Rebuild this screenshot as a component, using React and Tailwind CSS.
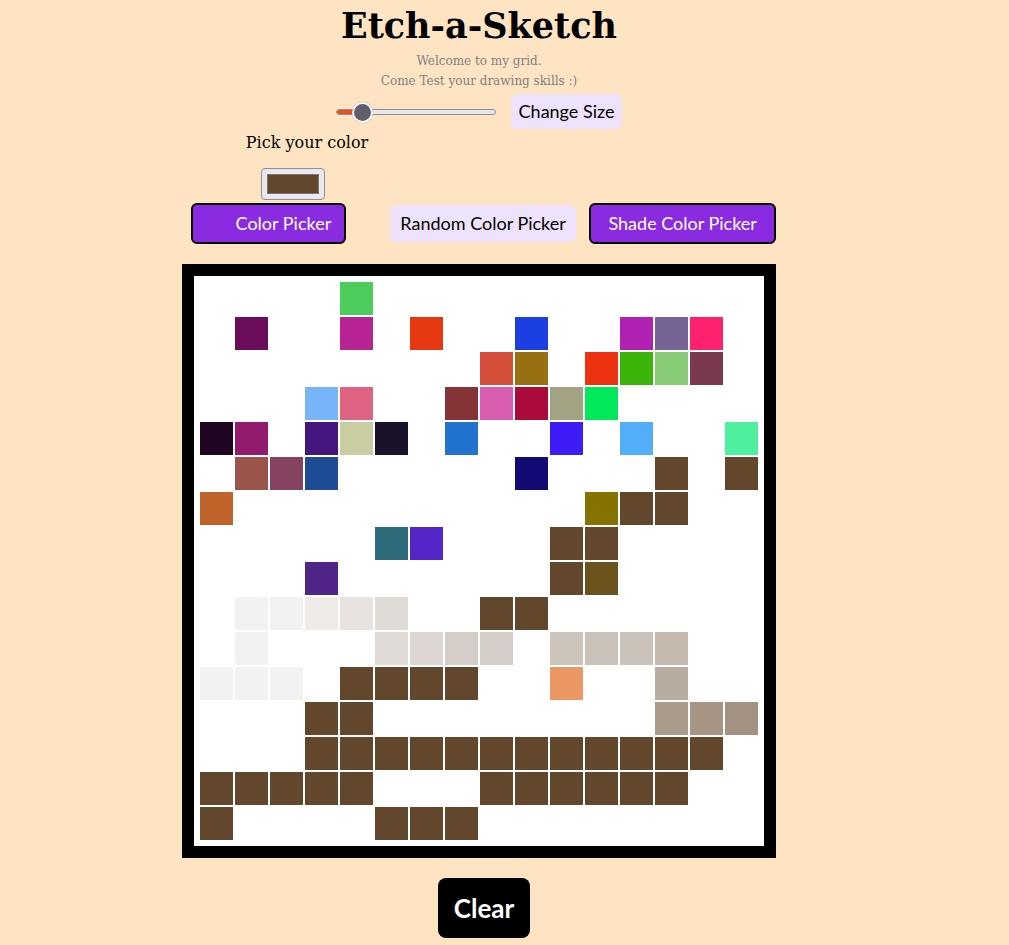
import React from 'react';

const B = '#62472d';

// 16x16 drawing, sparse: [row, col, color]
const painted = [
  [0, 4, '#4ccd5c'],
  [1, 1, '#6b0d5a'], [1, 4, '#b72393'], [1, 6, '#e63911'], [1, 9, '#1c3fe3'], [1, 12, '#b021b2'], [1, 13, '#776496'], [1, 14, '#fe226e'],
  [2, 8, '#d64f3a'], [2, 9, '#977011'], [2, 11, '#ed3212'], [2, 12, '#3cb50a'], [2, 13, '#88cc78'], [2, 14, '#7a3950'],
  [3, 3, '#76b5f7'], [3, 4, '#de6383'], [3, 7, '#863337'], [3, 8, '#d85db0'], [3, 9, '#ab0b3a'], [3, 10, '#a3a383'], [3, 11, '#00e85b'],
  [4, 0, '#200622'], [4, 1, '#931b6d'], [4, 3, '#46167f'], [4, 4, '#cacca1'], [4, 5, '#1a122b'], [4, 7, '#2273ce'], [4, 10, '#3d1cf8'], [4, 12, '#52aef8'], [4, 15, '#4fefa0'],
  [5, 1, '#9b544a'], [5, 2, '#864261'], [5, 3, '#1e4c95'], [5, 9, '#110a75'], [5, 13, B], [5, 15, B],
  [6, 0, '#c0632a'], [6, 11, '#857200'], [6, 12, B], [6, 13, B],
  [7, 5, '#2d6a7a'], [7, 6, '#5425c9'], [7, 10, B], [7, 11, B],
  [8, 3, '#512587'], [8, 10, B], [8, 11, '#6b531d'],
  [9, 1, '#f3f2f0'], [9, 2, '#f2f1ef'], [9, 3, '#efebe8'], [9, 4, '#e8e3e1'], [9, 5, '#dfdbd6'], [9, 8, B], [9, 9, B],
  [10, 1, '#f3f2f0'], [10, 5, '#dfdad5'], [10, 6, '#ddd6d2'], [10, 7, '#d5cdc7'], [10, 8, '#d5cdc8'], [10, 10, '#cdc4bb'], [10, 11, '#cbc2b9'], [10, 12, '#cbc2b9'], [10, 13, '#c5b8ad'],
  [11, 0, '#f3f2f0'], [11, 1, '#f3f2f0'], [11, 2, '#f3f2f0'], [11, 4, B], [11, 5, B], [11, 6, B], [11, 7, B], [11, 10, '#eb9763'], [11, 13, '#b8aba0'],
  [12, 3, B], [12, 4, B], [12, 13, '#ab9b8c'], [12, 14, '#a69484'], [12, 15, '#a39282'],
  [13, 3, B], [13, 4, B], [13, 5, B], [13, 6, B], [13, 7, B], [13, 8, B], [13, 9, B], [13, 10, B], [13, 11, B], [13, 12, B], [13, 13, B], [13, 14, B],
  [14, 0, B], [14, 1, B], [14, 2, B], [14, 3, B], [14, 4, B], [14, 8, B], [14, 9, B], [14, 10, B], [14, 11, B], [14, 12, B], [14, 13, B],
  [15, 0, B], [15, 5, B], [15, 6, B], [15, 7, B],
];

const cells = Array(256).fill('#ffffff');
painted.forEach(([r, c, col]) => { cells[r * 16 + c] = col; });

const sans = "font-['Lato',sans-serif]";

const Slider = () => (
  <div className="relative w-[160px] h-[20px] flex items-center">
    <div className="w-full h-[6px] rounded-full bg-[#e9e9ed] border border-[#8f8f9d] overflow-hidden">
      <div className="w-[24px] h-full bg-[#e8501a]" />
    </div>
    <div className="absolute left-[16px] top-0 w-[21px] h-[21px] rounded-full bg-[#5f5e6b] border-2 border-white shadow-[0_0_1px_rgba(0,0,0,0.5)]" />
  </div>
);

export default function App() {
  return (
    <div className="min-h-screen bg-[#ffe4c4] w-full">
      <div className="w-[958px] flex flex-col items-center pt-[5px]">
        <h1 className="font-['DejaVu_Serif',serif] font-bold text-[35px] leading-[42px] text-black">Etch-a-Sketch</h1>
        <p className="font-['DejaVu_Serif',serif] text-[12px] leading-[20px] text-[#808080] mt-[4px] text-center">
          Welcome to my grid.<br />Come Test your drawing skills :)
        </p>
        <div className="flex items-center gap-[15px] mt-[3px]">
          <Slider />
          <button className={`${sans} text-[18px] text-black bg-[#efe2fc] rounded-[6px] px-[8px] h-[35px]`}>Change Size</button>
        </div>

        <div className="w-[594px] flex flex-col">
          <div className="w-[250px] text-center font-['DejaVu_Serif',serif] text-[16px] leading-[20px] text-black mt-[4px]">Pick your color</div>
          <div className="ml-[79px] mt-[15px] w-[64px] h-[32px] rounded-[4px] border border-[#8f8f9d] bg-[#e9e9ed] flex items-center justify-center">
            <div className="w-[52px] h-[20px] border border-[#777] bg-[#62472d]" />
          </div>
          <div className={`flex items-center mt-[3px] ml-[9px] ${sans} text-[18px]`}>
            <button className="w-[155px] h-[41px] rounded-[6px] border-2 border-black bg-[#8a2be2] text-white pl-[30px]">Color Picker</button>
            <button className="ml-[44px] w-[187px] h-[37px] rounded-[6px] bg-[#efe2fc] text-black">Random Color Picker</button>
            <button className="ml-[13px] w-[187px] h-[41px] rounded-[6px] border-2 border-black bg-[#8a2be2] text-white">Shade Color Picker</button>
          </div>

          <div className="mt-[20px] w-[594px] h-[594px] border-[12px] border-black bg-white p-[5px]">
            <div className="grid grid-cols-16 grid-rows-16 w-full h-full">
              {cells.map((c, i) => (
                <div key={i} className="border border-white" style={{ backgroundColor: c }} />
              ))}
            </div>
          </div>
        </div>

        <button className={`${sans} font-bold text-[26px] text-white bg-black rounded-[8px] w-[92px] h-[60px] mt-[20px] ml-[10px]`}>Clear</button>
      </div>
    </div>
  );
}
